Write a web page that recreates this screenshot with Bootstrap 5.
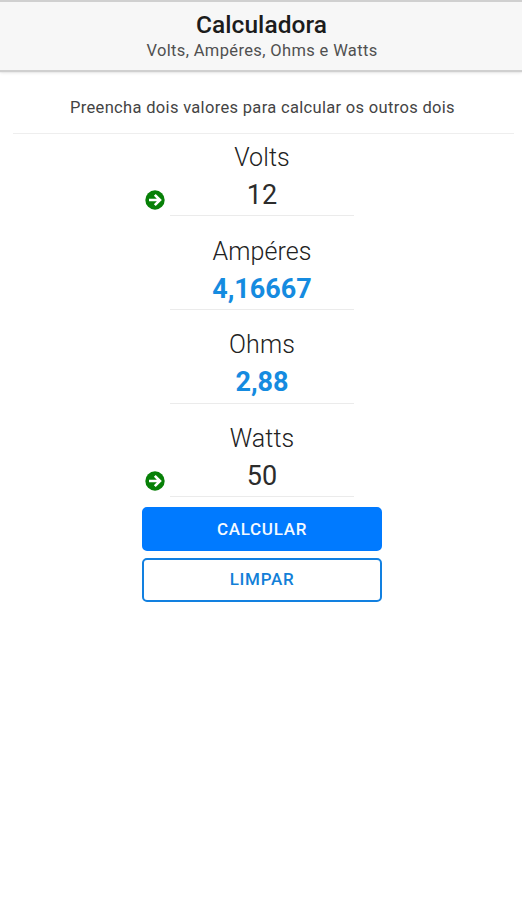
<!DOCTYPE html>
<html lang="pt-BR">
<head>
<meta charset="utf-8">
<meta name="viewport" content="width=device-width, initial-scale=1">
<title>Calculadora</title>
<link href="https://cdn.jsdelivr.net/npm/bootstrap@5.3.0/dist/css/bootstrap.min.css" rel="stylesheet">
<style>
  body { font-family: Roboto, sans-serif; color: #444; background: #fff; }
  .app-header { height: 70px; padding: 9px 0 0 1px; background: #f7f7f7; border-top: 2px solid #d0d0d0; box-shadow: 0 2px 1px 0 #d0d0d0, 0 3px 3px 0 #e8e8e8; }
  .app-title { font-size: 24.5px; line-height: 28px; font-weight: 500; color: #1c1c1c; letter-spacing: .05px; }
  .app-subtitle { font-size: 16.5px; line-height: 24px; letter-spacing: .36px; color: #505050; padding-left: 1px; }
  .hint { margin: 0 8px 0 13px; height: 64px; padding: 26px 2px 0 0; font-size: 16.5px; line-height: 23px; letter-spacing: .32px; border-bottom: 1px solid #eee; }
  .calc-form { width: 240px; padding-left: 1px; box-sizing: content-box; }
  .field { height: 93.7px; padding-top: 7px; }
  .field-label { display: block; font-size: 25px; line-height: 33px; font-weight: 300; letter-spacing: .1px; color: #222; padding-left: 1px; }
  .field-value { width: 184px; height: 42.3px; line-height: 42px; font-size: 27px; color: #2c2c2c; padding-left: 1px; border-bottom: 1px solid #ebebeb; }
  .is-result { color: #158be0; font-weight: 700; letter-spacing: 0; }
  .arrow-icon { left: 3px; top: 55.5px; width: 20px; height: 20px; }
  .calc-btn { height: 44px; padding: 0 0 0 1px; border-width: 2px; border-radius: 5px; font-size: 17px; letter-spacing: .7px; font-weight: 500; line-height: 39px; }
  .btn-calc { --bs-btn-bg: #007aff; --bs-btn-border-color: #007aff; --bs-btn-color: #f4f9ff; margin-top: -1.4px; }
  .btn-clear { --bs-btn-bg: #fff; --bs-btn-border-color: #1280e0; --bs-btn-color: #1280d8; margin-top: 6.5px; }
</style>
<script src="https://cdn.jsdelivr.net/npm/bootstrap@5.3.0/dist/js/bootstrap.bundle.min.js"></script>
</head>
<body>
<header class="app-header text-center">
  <h1 class="app-title m-0">Calculadora</h1>
  <div class="app-subtitle">Volts, Ampéres, Ohms e Watts</div>
</header>
<main>
  <p class="hint text-center mb-0">Preencha dois valores para calcular os outros dois</p>
  <div class="calc-form mx-auto">
    <section class="field position-relative text-center">
      <span class="field-label">Volts</span>
      <svg class="arrow-icon position-absolute" viewBox="0 0 20 20"><circle cx="10" cy="10" r="9.7" fill="#078007"/><path d="M4 10H15M9.8 4.8L15 10L9.8 15.2" fill="none" stroke="#fff" stroke-width="2.6"/></svg>
      <div class="field-value mx-auto">12</div>
    </section>
    <section class="field text-center">
      <span class="field-label">Ampéres</span>
      <div class="field-value is-result mx-auto">4,16667</div>
    </section>
    <section class="field text-center">
      <span class="field-label">Ohms</span>
      <div class="field-value is-result mx-auto">2,88</div>
    </section>
    <section class="field position-relative text-center">
      <span class="field-label">Watts</span>
      <svg class="arrow-icon position-absolute" viewBox="0 0 20 20"><circle cx="10" cy="10" r="9.7" fill="#078007"/><path d="M4 10H15M9.8 4.8L15 10L9.8 15.2" fill="none" stroke="#fff" stroke-width="2.6"/></svg>
      <div class="field-value mx-auto">50</div>
    </section>
    <div class="d-grid">
      <button type="button" class="btn btn-calc calc-btn">CALCULAR</button>
      <button type="button" class="btn btn-clear calc-btn">LIMPAR</button>
    </div>
  </div>
</main>
</body>
</html>
